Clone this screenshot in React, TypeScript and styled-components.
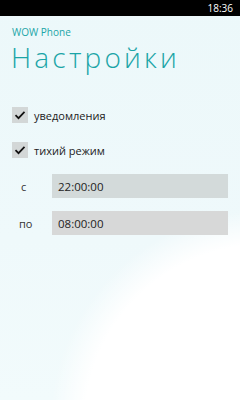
import React from "react";
import styled, { createGlobalStyle } from "styled-components";

const Global = createGlobalStyle`
  html, body { margin: 0; padding: 0; }
  body { width: 240px; height: 400px; overflow: hidden; font-family: "Open Sans", "Noto Sans", sans-serif; }
`;

const Screen = styled.div`
  width: 240px;
  height: 400px;
  display: flex;
  flex-direction: column;
  background:
    radial-gradient(circle 215px at 265px 425px, #ffffff 0%, #ffffff 84%, rgba(255,255,255,0) 100%),
    linear-gradient(180deg, #ecf8fa 0%, #eff9fb 60%, #f2fbfc 100%);
`;

const StatusBar = styled.div`
  height: 16px;
  background: #000;
  display: flex;
  justify-content: flex-end;
  align-items: center;
  padding-right: 7px;
  color: #fff;
  font-family: "Open Sans", sans-serif;
  font-size: 10px;
  line-height: 1;
`;

const Content = styled.div`
  display: flex;
  flex-direction: column;
  padding: 10px 12px 0 12px;
`;

const AppName = styled.div`
  color: #1ba5a7;
  font-size: 10px;
  line-height: 12px;
  height: 12px;
`;

const Title = styled.div`
  color: #1ba5a7;
  font-weight: 300;
  font-size: 28px;
  line-height: 32px;
  margin-top: 3px;
  margin-left: -1px;
  letter-spacing: 3.2px;
`;

const Checks = styled.div`
  display: flex;
  flex-direction: column;
  gap: 19px;
  margin-top: 34px;
`;

const CheckRow = styled.label`
  display: flex;
  align-items: center;
  gap: 6px;
  font-size: 11px;
  color: #222;
`;

const Box = styled.span`
  width: 16px;
  height: 16px;
  background: #d3d7d7;
  display: flex;
  align-items: center;
  justify-content: center;
`;

const Fields = styled.div`
  display: grid;
  grid-template-columns: 40px 176px;
  row-gap: 13px;
  margin-top: 16px;
  align-items: center;
`;

const FieldLabel = styled.div<{ $indent: number }>`
  font-size: 11px;
  color: #333;
  padding-left: ${(p) => p.$indent}px;
`;

const TimeBox = styled.div<{ $bg: string }>`
  height: 24px;
  background: ${(p) => p.$bg};
  display: flex;
  align-items: center;
  padding-left: 6px;
  font-size: 11.5px;
  color: #222;
`;

const Check = () => (
  <svg width="12" height="10" viewBox="0 0 12 10">
    <path d="M1.5 5.2 L4.5 8.2 L10.5 1.8" fill="none" stroke="#111" strokeWidth="1.7" />
  </svg>
);

export default function App() {
  return (
    <>
      <Global />
      <Screen>
        <StatusBar>18:36</StatusBar>
        <Content>
          <AppName>WOW Phone</AppName>
          <Title>Настройки</Title>
          <Checks>
            <CheckRow>
              <Box><Check /></Box>
              уведомления
            </CheckRow>
            <CheckRow>
              <Box><Check /></Box>
              тихий режим
            </CheckRow>
          </Checks>
          <Fields>
            <FieldLabel $indent={9}>с</FieldLabel>
            <TimeBox $bg="#d3dada">22:00:00</TimeBox>
            <FieldLabel $indent={7}>по</FieldLabel>
            <TimeBox $bg="#d7d8d8">08:00:00</TimeBox>
          </Fields>
        </Content>
      </Screen>
    </>
  );
}
